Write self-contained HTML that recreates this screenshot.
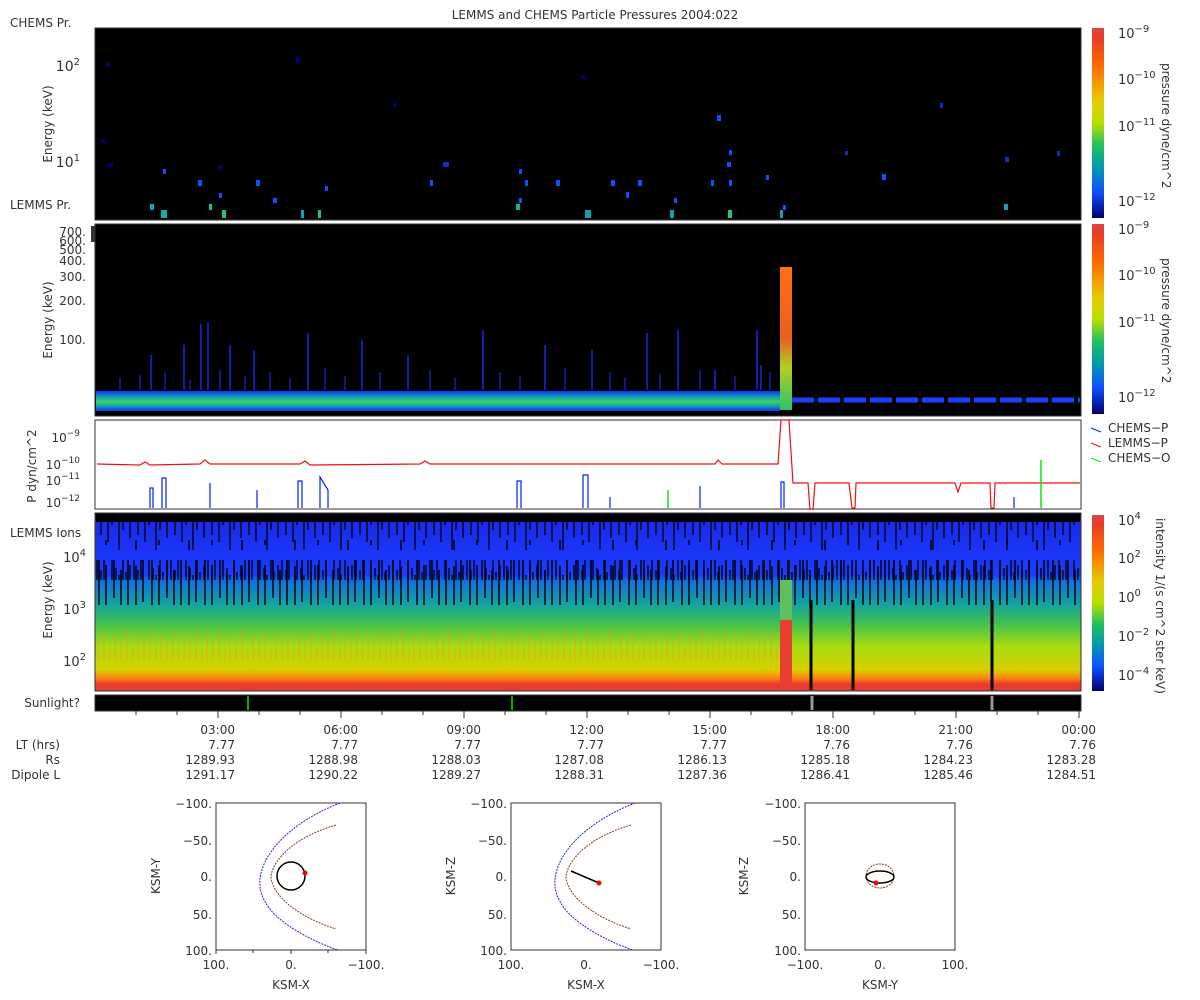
<!DOCTYPE html>
<html><head><meta charset="utf-8"><style>
body{margin:0;background:#fff;width:1200px;height:1000px;overflow:hidden}
svg{display:block;font-family:"DejaVu Sans","Liberation Sans",sans-serif;font-size:11px;fill:#333}
</style></head><body>
<svg width="1200" height="1000" viewBox="0 0 1200 1000" xmlns="http://www.w3.org/2000/svg">
<defs>
<linearGradient id="jet" x1="0" y1="0" x2="0" y2="1">
<stop offset="0" stop-color="#d84848"/><stop offset="0.05" stop-color="#e83c28"/><stop offset="0.2" stop-color="#ff6a00"/><stop offset="0.38" stop-color="#e8c800"/><stop offset="0.5" stop-color="#b8e000"/><stop offset="0.62" stop-color="#20c060"/><stop offset="0.74" stop-color="#0098b0"/><stop offset="0.86" stop-color="#1050ff"/><stop offset="1" stop-color="#000070"/>
</linearGradient>
<linearGradient id="p4" x1="0" y1="0" x2="0" y2="1">
<stop offset="0" stop-color="#000"/><stop offset="0.04" stop-color="#1a2ae8"/><stop offset="0.35" stop-color="#1a3cff"/><stop offset="0.38" stop-color="#1070e0"/><stop offset="0.5" stop-color="#10a0a8"/><stop offset="0.62" stop-color="#40c050"/><stop offset="0.75" stop-color="#a8dc10"/><stop offset="0.88" stop-color="#d8d000"/><stop offset="0.93" stop-color="#ff8010"/><stop offset="0.96" stop-color="#e83c30"/><stop offset="1" stop-color="#e83c30"/>
</linearGradient>
<linearGradient id="band" x1="0" y1="0" x2="0" y2="1">
<stop offset="0" stop-color="#1030ff"/><stop offset="0.3" stop-color="#10a0b0"/><stop offset="0.55" stop-color="#40d060"/><stop offset="0.75" stop-color="#10a0b0"/><stop offset="1" stop-color="#1030ff"/>
</linearGradient>
<linearGradient id="spike" x1="0" y1="0" x2="0" y2="1">
<stop offset="0" stop-color="#ff7010"/><stop offset="0.5" stop-color="#e86020"/><stop offset="0.7" stop-color="#b0d020"/><stop offset="1" stop-color="#30c070"/>
</linearGradient>
<pattern id="streak" x="95" y="0" width="37" height="80" patternUnits="userSpaceOnUse">
<path d="M2 0V40M6 10V55M9 0V30M13 20V62M17 0V45M21 8V35M24 15V70M28 0V50M31 12V40M35 5V58" stroke="#000" stroke-width="1.3"/>
</pattern>
<pattern id="streak2" x="95" y="0" width="53" height="80" patternUnits="userSpaceOnUse">
<path d="M4 0V50M11 5V65M19 0V38M26 10V60M33 0V48M41 6V70M48 0V42" stroke="#000" stroke-width="1.5"/>
</pattern>
<pattern id="orng" x="95" y="0" width="23" height="60" patternUnits="userSpaceOnUse">
<path d="M3 40V60M9 30V60M15 45V60M20 35V60" stroke="#f09020" stroke-width="1" opacity="0.6"/>
</pattern>
</defs>
<text x="595" y="19" text-anchor="middle" font-size="12">LEMMS and CHEMS Particle Pressures  2004:022</text>

<!-- Panel 1 -->
<text x="10" y="27" font-size="12">CHEMS Pr.</text>
<text x="10" y="209" font-size="12">LEMMS Pr.</text>
<rect x="95" y="28" width="986" height="192" fill="#000" stroke="#333"/>
<text x="52" y="124" transform="rotate(-90 52 124)" text-anchor="middle" font-size="12">Energy (keV)</text>
<text x="80" y="71" text-anchor="end" font-size="14">10<tspan dy="-6" font-size="10">2</tspan></text>
<text x="80" y="167" text-anchor="end" font-size="14">10<tspan dy="-6" font-size="10">1</tspan></text>
<g fill="#1050ff">
<rect x="106" y="63" width="3" height="4" fill="#000090"/><rect x="296" y="57" width="4" height="5" fill="#000090"/>
<rect x="102" y="139" width="3" height="4" fill="#000090"/><rect x="109" y="163" width="4" height="4" fill="#000090"/>
<rect x="163" y="169" width="3" height="5"/><rect x="198" y="180" width="4" height="6"/><rect x="219" y="165" width="3" height="4" fill="#000090"/><rect x="219" y="193" width="3" height="5"/>
<rect x="256" y="180" width="4" height="6"/><rect x="273" y="198" width="4" height="5"/><rect x="325" y="186" width="3" height="5"/>
<rect x="393" y="103" width="3" height="4" fill="#000090"/><rect x="430" y="180" width="3" height="6"/><rect x="443" y="162" width="6" height="5" fill="#1030c0"/>
<rect x="519" y="169" width="3" height="5"/><rect x="519" y="198" width="3" height="5"/><rect x="525" y="180" width="3" height="6"/><rect x="556" y="180" width="4" height="6"/>
<rect x="582" y="75" width="3" height="4" fill="#000090"/><rect x="611" y="180" width="4" height="6"/><rect x="626" y="192" width="3" height="6"/><rect x="638" y="180" width="4" height="6"/>
<rect x="674" y="198" width="3" height="5"/><rect x="711" y="180" width="3" height="6"/><rect x="717" y="115" width="4" height="6"/><rect x="729" y="150" width="3" height="5"/><rect x="727" y="162" width="4" height="5"/><rect x="729" y="180" width="3" height="6"/><rect x="766" y="175" width="3" height="5"/><rect x="783" y="205" width="3" height="5"/>
<rect x="845" y="151" width="3" height="4" fill="#1030c0"/><rect x="882" y="174" width="4" height="6"/><rect x="940" y="103" width="3" height="5" fill="#1030c0"/><rect x="1005" y="157" width="4" height="5" fill="#1030c0"/><rect x="1057" y="151" width="3" height="5" fill="#1030c0"/>
<rect x="150" y="204" width="4" height="6" fill="#10a0c0"/><rect x="161" y="210" width="6" height="8" fill="#10b0a0"/><rect x="209" y="204" width="3" height="6" fill="#20c080"/><rect x="222" y="210" width="4" height="8" fill="#30c070"/><rect x="301" y="210" width="3" height="8" fill="#10a0b0"/><rect x="318" y="210" width="3" height="8" fill="#30c070"/><rect x="516" y="204" width="4" height="6" fill="#10b0a0"/><rect x="585" y="210" width="6" height="8" fill="#10a0b0"/><rect x="670" y="210" width="4" height="8" fill="#10a0b0"/><rect x="728" y="210" width="4" height="8" fill="#30c070"/><rect x="780" y="210" width="3" height="8" fill="#10a0b0"/><rect x="1004" y="204" width="4" height="6" fill="#10a0b0"/>
</g>
<rect x="1092" y="28" width="12" height="190" fill="url(#jet)"/>
<text x="1118" y="38" font-size="13">10<tspan dy="-6" font-size="10">−9</tspan></text>
<text x="1118" y="84" font-size="13">10<tspan dy="-6" font-size="10">−10</tspan></text>
<text x="1118" y="131" font-size="13">10<tspan dy="-6" font-size="10">−11</tspan></text>
<text x="1118" y="206" font-size="13">10<tspan dy="-6" font-size="10">−12</tspan></text>
<text x="1162" y="63" transform="rotate(90 1162 63)" font-size="12">pressure dyne/cm^2</text>

<!-- Panel 2 -->
<rect x="95" y="224" width="986" height="192" fill="#000" stroke="#333"/>
<rect x="91" y="226" width="4" height="16" fill="#333"/>
<text x="52" y="320" transform="rotate(-90 52 320)" text-anchor="middle" font-size="12">Energy (keV)</text>
<g text-anchor="end" font-size="12"><text x="86" y="236">700.</text><text x="86" y="245">600.</text><text x="86" y="254">500.</text><text x="86" y="265">400.</text><text x="86" y="281">300.</text><text x="86" y="305">200.</text><text x="86" y="344">100.</text></g>
<rect x="96" y="391" width="684" height="20" fill="url(#band)"/>
<g stroke="#1a30ff" stroke-width="1.3">
<path d="M151 390V355M184 390V345M201 390V324M208 390V322M230 390V345M254 390V350M308 390V333M362 390V340M408 390V355M483 390V330M545 390V345M592 390V350M647 390V333M678 390V330M715 390V370M757 390V330M761 390V365"/>
<path d="M120 390V378M140 390V375M165 390V372M190 390V380M220 390V370M245 390V376M270 390V372M290 390V378M325 390V368M345 390V376M380 390V372M430 390V370M455 390V378M500 390V372M520 390V376M565 390V368M610 390V372M625 390V378M660 390V374M700 390V370M735 390V376M770 390V372" stroke-width="1"/>
</g>
<rect x="780" y="267" width="12" height="143" fill="url(#spike)"/>
<path d="M792 400H1080" stroke="#1a40ff" stroke-width="5" stroke-dasharray="22 4"/>
<rect x="1092" y="224" width="12" height="190" fill="url(#jet)"/>
<text x="1118" y="234" font-size="13">10<tspan dy="-6" font-size="10">−9</tspan></text>
<text x="1118" y="280" font-size="13">10<tspan dy="-6" font-size="10">−10</tspan></text>
<text x="1118" y="327" font-size="13">10<tspan dy="-6" font-size="10">−11</tspan></text>
<text x="1118" y="402" font-size="13">10<tspan dy="-6" font-size="10">−12</tspan></text>
<text x="1162" y="258" transform="rotate(90 1162 258)" font-size="12">pressure dyne/cm^2</text>

<!-- Panel 3 -->
<rect x="95" y="420" width="986" height="89" fill="#fff" stroke="#333"/>
<text x="36" y="466" transform="rotate(-90 36 466)" text-anchor="middle" font-size="12">P dyn/cm^2</text>
<g text-anchor="end" font-size="12"><text x="80" y="442">10<tspan dy="-6" font-size="9">−9</tspan></text><text x="80" y="469">10<tspan dy="-6" font-size="9">−10</tspan></text><text x="80" y="485">10<tspan dy="-6" font-size="9">−11</tspan></text><text x="80" y="507">10<tspan dy="-6" font-size="9">−12</tspan></text></g>
<path d="M97 464L140 465L145 462L150 465L200 464L205 460L210 464L300 464L305 461L310 465L420 464L425 461L430 464L715 464L718 460L722 464L778 464L781 420H789L793 483L808 483L810 510M813 510L815 483L849 483L852 508H855L856 483L955 483L958 492L961 483L990 483L991 508H994L995 483L1080 483" fill="none" stroke="#f01010" stroke-width="1.2"/>
<path d="M150 508V488H153V508M162 508V478H166V508M210 508V483M257 508V490M298 508V481H302V508M320 508V477L328 490V508M517 508V481H521V508M583 508V475H588V508M610 508V497M700 508V486M781 508V482H784V508M1014 508V497" stroke="#0020ff" fill="none" stroke-width="1.2"/>
<path d="M668 508V490M1041 508V460" stroke="#10e010" stroke-width="1.5"/>
<g font-size="12"><path d="M1091 428l10 4" stroke="#0020ff"/><text x="1108" y="432">CHEMS−P</text><path d="M1091 443l10 4" stroke="#f01010"/><text x="1108" y="447">LEMMS−P</text><path d="M1091 458l10 4" stroke="#10e010"/><text x="1108" y="462">CHEMS−O</text></g>

<!-- Panel 4 -->
<text x="10" y="537" font-size="12">LEMMS Ions</text>
<rect x="95" y="513" width="986" height="178" fill="url(#p4)" stroke="#333"/>
<rect x="96" y="514" width="984" height="8" fill="#000"/>
<rect x="96" y="522" width="984" height="58" fill="url(#streak)"/>
<rect x="96" y="540" width="984" height="65" fill="url(#streak2)"/>
<rect x="96" y="620" width="684" height="60" fill="url(#orng)"/>
<rect x="780" y="580" width="12" height="110" fill="#e84030"/>
<rect x="780" y="580" width="12" height="40" fill="#60c060"/>
<path d="M811 600V690M853 600V690M992 600V690" stroke="#000" stroke-width="3"/>
<text x="52" y="600" transform="rotate(-90 52 600)" text-anchor="middle" font-size="12">Energy (keV)</text>
<g text-anchor="end" font-size="13"><text x="86" y="562">10<tspan dy="-6" font-size="10">4</tspan></text><text x="86" y="614">10<tspan dy="-6" font-size="10">3</tspan></text><text x="86" y="666">10<tspan dy="-6" font-size="10">2</tspan></text></g>
<rect x="1092" y="515" width="12" height="176" fill="url(#jet)"/>
<g font-size="13"><text x="1118" y="525">10<tspan dy="-6" font-size="10">4</tspan></text><text x="1118" y="563">10<tspan dy="-6" font-size="10">2</tspan></text><text x="1118" y="602">10<tspan dy="-6" font-size="10">0</tspan></text><text x="1118" y="641">10<tspan dy="-6" font-size="10">−2</tspan></text><text x="1118" y="680">10<tspan dy="-6" font-size="10">−4</tspan></text></g>
<text x="1156" y="518" transform="rotate(90 1156 518)" font-size="12">intensity 1/(s cm^2 ster keV)</text>

<!-- Sunlight -->
<text x="80" y="707" text-anchor="end" font-size="12">Sunlight?</text>
<rect x="95" y="695" width="986" height="16" fill="#000" stroke="#333"/>
<path d="M248 696V710M512 696V710" stroke="#10e010" stroke-width="1.5"/>
<path d="M812 696V710M992 696V710" stroke="#999" stroke-width="3"/>
<g stroke="#333"><path d="M136 711v4M177 711v4M218 711v7M259 711v4M300 711v4M341 711v7M382 711v4M423 711v4M464 711v7M505 711v4M546 711v4M587 711v7M628 711v4M669 711v4M710 711v7M751 711v4M792 711v4M833 711v7M874 711v4M915 711v4M956 711v7M997 711v4M1038 711v4M1079 711v7"/></g>

<g font-size="12" text-anchor="end">
<text x="60" y="749">LT (hrs)</text><text x="60" y="764">Rs</text><text x="60" y="779">Dipole L</text>
<text x="235" y="734">03:00</text><text x="235" y="749">7.77</text><text x="235" y="764">1289.93</text><text x="235" y="779">1291.17</text>
<text x="358" y="734">06:00</text><text x="358" y="749">7.77</text><text x="358" y="764">1288.98</text><text x="358" y="779">1290.22</text>
<text x="481" y="734">09:00</text><text x="481" y="749">7.77</text><text x="481" y="764">1288.03</text><text x="481" y="779">1289.27</text>
<text x="604" y="734">12:00</text><text x="604" y="749">7.77</text><text x="604" y="764">1287.08</text><text x="604" y="779">1288.31</text>
<text x="727" y="734">15:00</text><text x="727" y="749">7.77</text><text x="727" y="764">1286.13</text><text x="727" y="779">1287.36</text>
<text x="850" y="734">18:00</text><text x="850" y="749">7.76</text><text x="850" y="764">1285.18</text><text x="850" y="779">1286.41</text>
<text x="973" y="734">21:00</text><text x="973" y="749">7.76</text><text x="973" y="764">1284.23</text><text x="973" y="779">1285.46</text>
<text x="1096" y="734">00:00</text><text x="1096" y="749">7.76</text><text x="1096" y="764">1283.28</text><text x="1096" y="779">1284.51</text>
</g>

<!-- Orbit plots -->
<g transform="translate(216,803)">
<rect x="0" y="0" width="150" height="147" fill="#fff" stroke="#333"/>
<g font-size="12" text-anchor="end"><text x="-4" y="5">−100.</text><text x="-4" y="42">−50.</text><text x="-4" y="78">0.</text><text x="-4" y="116">50.</text><text x="-4" y="152">100.</text></g>
<g font-size="12" text-anchor="middle"><text x="0" y="166">100.</text><text x="75" y="166">0.</text><text x="150" y="166">−100.</text><text x="75" y="186">KSM-X</text></g>
<path d="M0 147v4M75 147v4M150 147v4M37 147v3M112 147v3" stroke="#333"/>
<path d="M124 0C60 25 30 70 50 100C60 120 100 140 122 147" fill="none" stroke="#2020ff" stroke-dasharray="2 1"/>
<path d="M120 22C75 35 55 60 55 75C58 95 85 115 120 126" fill="none" stroke="#804020" stroke-dasharray="2 1"/>
</g>
<text x="160" y="876" transform="rotate(-90 160 876)" text-anchor="middle" font-size="12">KSM-Y</text>
<circle cx="291" cy="876" r="14" fill="none" stroke="#000" stroke-width="1.5"/>
<circle cx="305" cy="873" r="2.5" fill="#f00"/>
<g transform="translate(511,803)">
<rect x="0" y="0" width="150" height="147" fill="#fff" stroke="#333"/>
<g font-size="12" text-anchor="end"><text x="-4" y="5">−100.</text><text x="-4" y="42">−50.</text><text x="-4" y="78">0.</text><text x="-4" y="116">50.</text><text x="-4" y="152">100.</text></g>
<g font-size="12" text-anchor="middle"><text x="0" y="166">100.</text><text x="75" y="166">0.</text><text x="150" y="166">−100.</text><text x="75" y="186">KSM-X</text></g>
<path d="M124 0C60 25 30 70 50 100C60 120 100 140 122 147" fill="none" stroke="#2020ff" stroke-dasharray="2 1"/>
<path d="M120 22C75 35 55 60 55 75C58 95 85 115 120 126" fill="none" stroke="#804020" stroke-dasharray="2 1"/>
<path d="M60 68L88 80" stroke="#000" stroke-width="1.5"/><circle cx="88" cy="80" r="2.5" fill="#f00"/>
</g>
<text x="455" y="876" transform="rotate(-90 455 876)" text-anchor="middle" font-size="12">KSM-Z</text>
<g transform="translate(805,803)">
<rect x="0" y="0" width="150" height="147" fill="#fff" stroke="#333"/>
<g font-size="12" text-anchor="end"><text x="-4" y="5">−100.</text><text x="-4" y="42">−50.</text><text x="-4" y="78">0.</text><text x="-4" y="116">50.</text><text x="-4" y="152">100.</text></g>
<g font-size="12" text-anchor="middle"><text x="0" y="166">−100.</text><text x="75" y="166">0.</text><text x="150" y="166">100.</text><text x="75" y="186">KSM-Y</text></g>
<ellipse cx="75" cy="73" rx="14" ry="12" fill="none" stroke="#804020" stroke-dasharray="2 1"/>
<ellipse cx="75" cy="74" rx="14" ry="6" fill="none" stroke="#000" stroke-width="1.5"/>
<circle cx="71" cy="80" r="2.5" fill="#f00"/>
</g>
<text x="748" y="876" transform="rotate(-90 748 876)" text-anchor="middle" font-size="12">KSM-Z</text>
</svg>
</body></html>
